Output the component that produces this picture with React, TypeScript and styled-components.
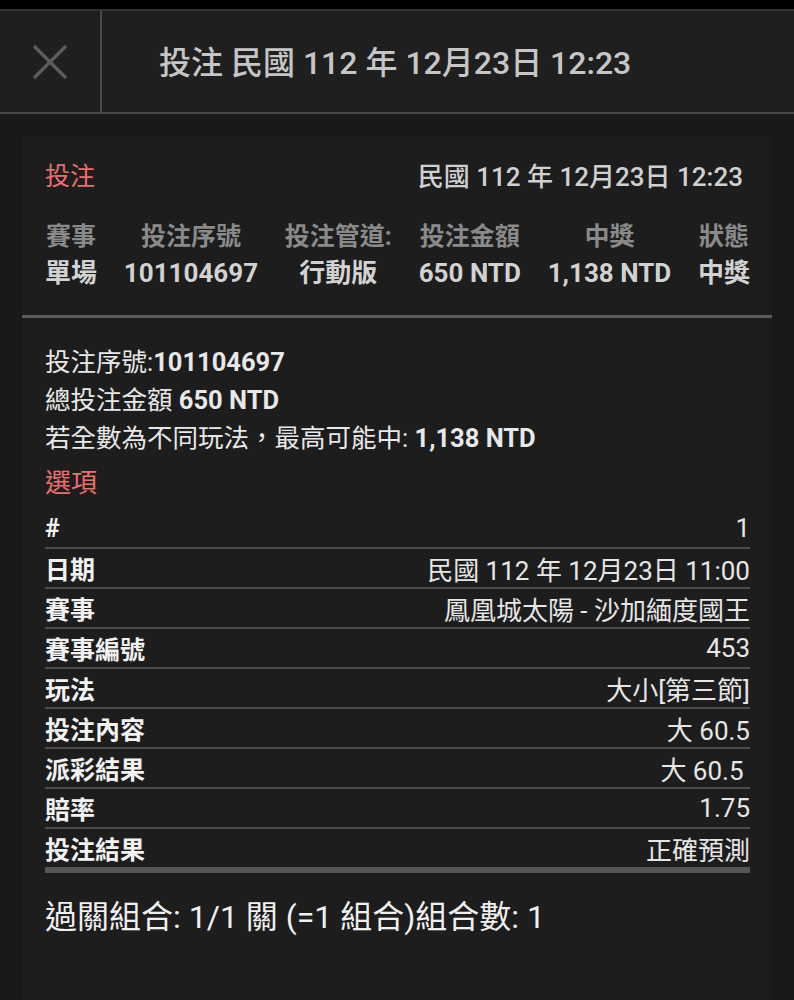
import React from "react";
import styled, { createGlobalStyle } from "styled-components";

const GlobalStyle = createGlobalStyle`
  body {
    margin: 0;
    background: #191919;
    font-family: Roboto, "Noto Sans CJK TC", "Noto Sans", sans-serif;
  }
`;

const Page = styled.div`
  min-height: 1000px;
  background: #191919;
  color: #e8e8e8;
`;

const TopStrip = styled.div`
  height: 9px;
  background: #000000;
`;

const Header = styled.div`
  height: 101px;
  display: flex;
  align-items: stretch;
  background: #1f1f1f;
  border-top: 2px solid #333333;
  border-bottom: 2px solid #4a4a4a;
`;

const CloseBox = styled.div`
  width: 100px;
  display: flex;
  align-items: center;
  justify-content: center;
  border-right: 2px solid #4a4a4a;
`;

const Title = styled.div`
  display: flex;
  align-items: center;
  padding: 0 0 3px 57px;
  font-size: 32px;
  font-weight: 500;
  color: #c6c6c6;
  white-space: pre;
`;

const Card = styled.div`
  margin: 22px 22px 0;
  background: #1d1d1d;
  padding-bottom: 70px;
`;

const CardTop = styled.div`
  padding: 26px 22px 23px 23px;
  border-bottom: 3px solid #5a5a5a;
`;

const TopRow = styled.div`
  display: flex;
  justify-content: space-between;
  align-items: center;
  line-height: 30px;
`;

const RedLabel = styled.div<{ $size?: number }>`
  font-size: ${(p) => p.$size ?? 25}px;
  color: #ec6f6f;
`;

const TopDate = styled.div`
  margin-right: 7px;
  font-size: 26px;
  font-weight: 500;
  color: #d0d0d0;
  white-space: pre;
`;

const Summary = styled.div`
  display: grid;
  grid-template-columns: repeat(6, auto);
  justify-content: space-between;
  margin-top: 26px;
  line-height: 37px;
  font-weight: 700;
  text-align: center;
`;

const SumHead = styled.div`
  font-size: 25px;
  color: #8a8a8a;
`;

const SumValue = styled.div`
  font-size: 26px;
  color: #d2d2d2;
  white-space: pre;
`;

const Body = styled.div`
  padding: 25px 22px 0 23px;
`;

const InfoLine = styled.div`
  font-size: 25.5px;
  line-height: 38px;
  color: #e8e8e8;
  b {
    font-weight: 700;
  }
`;

const OptionsTitle = styled(RedLabel)`
  margin-top: 7px;
  line-height: 38px;
`;

const Table = styled.div`
  margin-top: 7px;
`;

const Row = styled.div<{ $last?: boolean }>`
  display: flex;
  justify-content: space-between;
  align-items: center;
  height: 38px;
  border-bottom: ${(p) => (p.$last ? "6px solid #555555" : "2px solid #4c4c4c")};
`;

const RowLabel = styled.div`
  font-size: 25px;
  font-weight: 700;
  color: #f2f2f2;
`;

const RowValue = styled.div`
  font-size: 26px;
  color: #e6e6e6;
  white-space: pre;
`;

const Combo = styled.div`
  margin-top: 24px;
  font-size: 32px;
  line-height: 40px;
  color: #f0f0f0;
  white-space: pre;
`;

const CloseIcon = () => (
  <svg width="36" height="36" viewBox="0 0 36 36">
    <path d="M2 2 L34 34 M34 2 L2 34" stroke="#5c5c5c" strokeWidth="3.2" />
  </svg>
);

const summary = [
  ["賽事", "單場"],
  ["投注序號", "101104697"],
  ["投注管道:", "行動版"],
  ["投注金額", "650 NTD"],
  ["中獎", "1,138 NTD"],
  ["狀態", "中獎"],
];

const rows = [
  ["#", "1"],
  ["日期", "民國 112 年 12月23日 11:00"],
  ["賽事", "鳳凰城太陽 - 沙加緬度國王"],
  ["賽事編號", "453"],
  ["玩法", "大小[第三節]"],
  ["投注內容", "大 60.5"],
  ["派彩結果", "大 60.5 "],
  ["賠率", "1.75"],
  ["投注結果", "正確預測"],
];

const App = () => {
  return (
    <Page>
      <GlobalStyle />
      <TopStrip />
      <Header>
        <CloseBox>
          <CloseIcon />
        </CloseBox>
        <Title>投注 民國 112 年 12月23日 12:23</Title>
      </Header>
      <Card>
        <CardTop>
          <TopRow>
            <RedLabel>投注</RedLabel>
            <TopDate>民國 112 年 12月23日 12:23</TopDate>
          </TopRow>
          <Summary>
            {summary.map(([h]) => (
              <SumHead key={h}>{h}</SumHead>
            ))}
            {summary.map(([h, v]) => (
              <SumValue key={h + v}>{v}</SumValue>
            ))}
          </Summary>
        </CardTop>
        <Body>
          <InfoLine>
            投注序號:<b>101104697</b>
          </InfoLine>
          <InfoLine>
            總投注金額 <b>650 NTD</b>
          </InfoLine>
          <InfoLine>
            若全數為不同玩法，最高可能中: <b>1,138 NTD</b>
          </InfoLine>
          <OptionsTitle $size={26}>選項</OptionsTitle>
          <Table>
            {rows.map(([label, value], i) => (
              <Row key={label + i} $last={i === rows.length - 1}>
                <RowLabel>{label}</RowLabel>
                <RowValue>{value}</RowValue>
              </Row>
            ))}
          </Table>
          <Combo>過關組合: 1/1 關 (=1 組合)組合數: 1</Combo>
        </Body>
      </Card>
    </Page>
  );
};

export default App;
